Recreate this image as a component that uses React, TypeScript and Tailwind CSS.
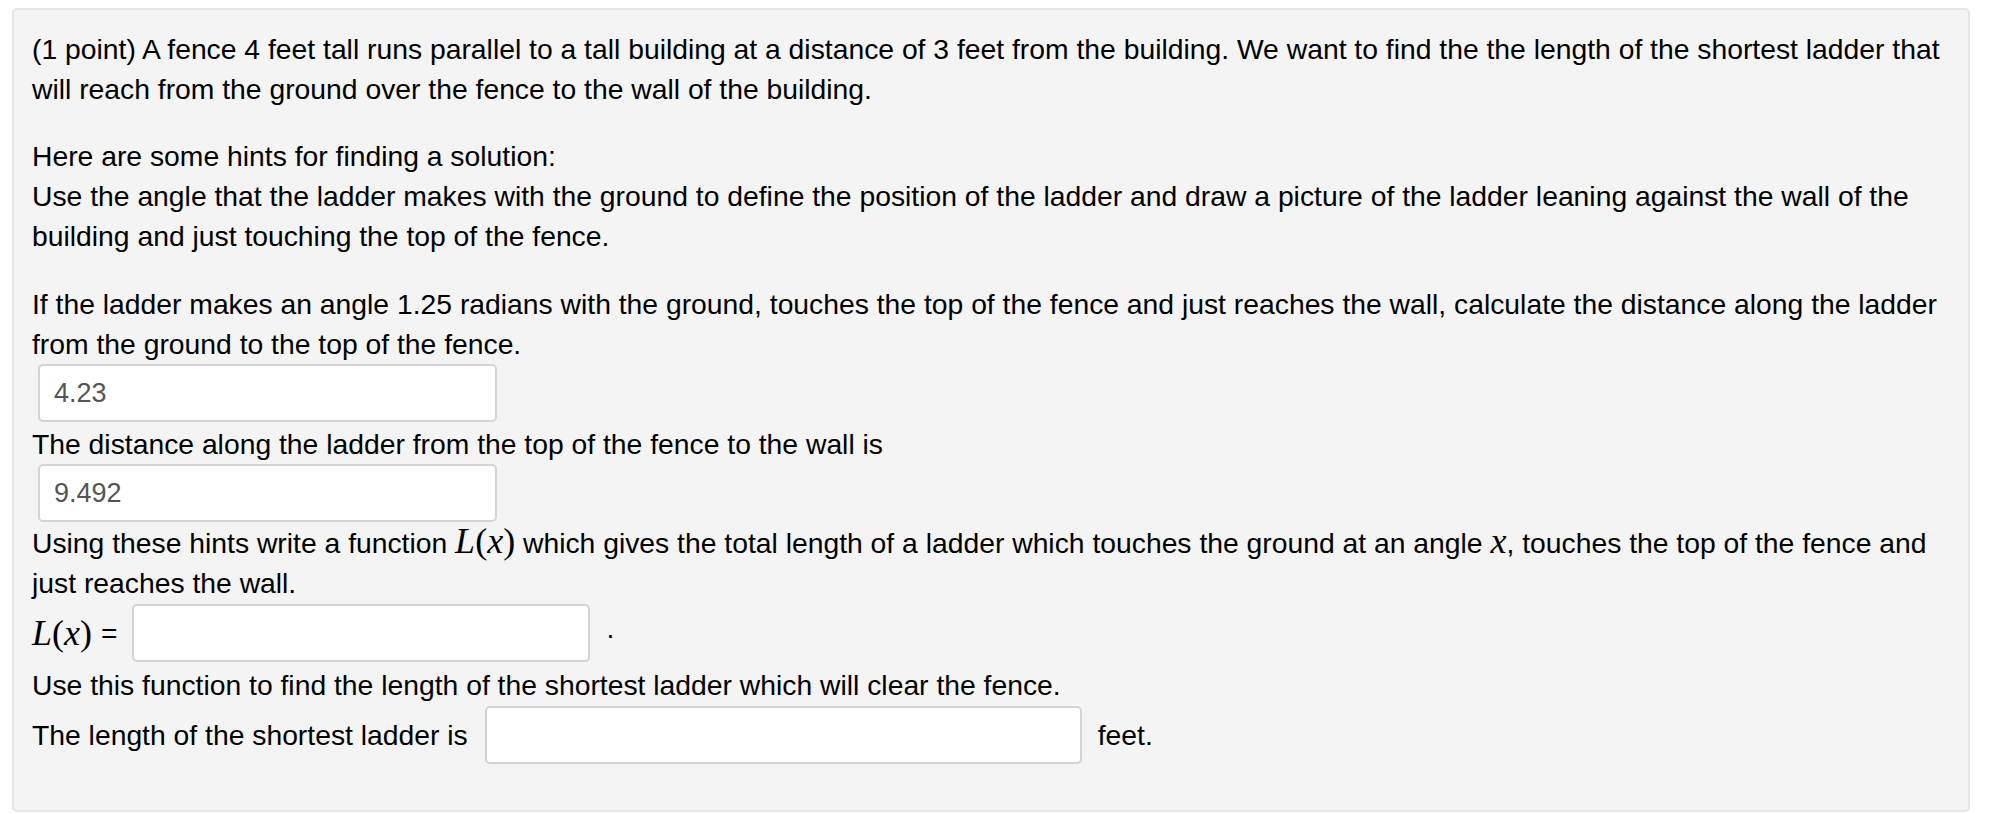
import React from 'react';

function AnswerBox({ value, className = '' }: { value?: string; className?: string }) {
  return (
    <div
      className={`h-[58px] shrink-0 rounded-[5px] border-2 border-[#d4d4d4] bg-white px-[14px] text-[27px] leading-[54px] text-[#555] ${className}`}
    >
      {value}
    </div>
  );
}

function MathL() {
  return (
    <span className="inline-block font-['Liberation_Serif'] text-[36px] leading-[30px] italic">
      L<span className="not-italic">(</span>x<span className="not-italic">)</span>
    </span>
  );
}

export default function App() {
  return (
    <div className="min-h-screen bg-white pt-2 pl-3 pr-[34px]">
      <div className="rounded-[5px] border-2 border-[#e6e6e6] bg-[#f4f4f4] px-[18px] pt-[19px] pb-[46px] font-['Liberation_Sans',Arial,sans-serif] text-[28.3px] leading-[40px] text-black">
        <p>
          (1 point) A fence 4 feet tall runs parallel to a tall building at a distance of 3 feet from the building.
          We want to find the the length of the shortest ladder that will reach from the ground over the fence to the
          wall of the building.
        </p>

        <p className="mt-[27px]">Here are some hints for finding a solution:</p>
        <p>
          Use the angle that the ladder makes with the ground to define the position of the ladder and draw a picture of
          the ladder leaning against the wall of the building and just touching the top of the fence.
        </p>

        <p className="mt-[28px]">
          If the ladder makes an angle 1.25 radians with the ground, touches the top of the fence and just reaches the
          wall, calculate the distance along the ladder from the ground to the top of the fence.
        </p>
        <AnswerBox value="4.23" className="ml-[6px] w-[459px]" />
        <p className="mt-[2px]">The distance along the ladder from the top of the fence to the wall is</p>
        <AnswerBox value="9.492" className="ml-[6px] w-[459px]" />

        <p className="mt-[1px]">
          Using these hints write a function <MathL /> which gives the total length of a ladder which touches the ground
          at an angle{' '}
          <span className="inline-block font-['Liberation_Serif'] text-[36px] leading-[30px] italic">x</span>, touches
          the top of the fence and just reaches the wall.
        </p>
        <div className="mt-px flex items-center">
          <MathL />
          <span className="ml-[9px]">=</span>
          <AnswerBox className="ml-[14px] w-[458px]" />
          <span className="mb-[10px] ml-[17px]">.</span>
        </div>

        <p className="mt-[3px]">Use this function to find the length of the shortest ladder which will clear the fence.</p>
        <div className="mt-px flex items-center">
          <span>The length of the shortest ladder is</span>
          <AnswerBox className="ml-[17px] w-[597px]" />
          <span className="ml-[16px]">feet.</span>
        </div>
      </div>
    </div>
  );
}
